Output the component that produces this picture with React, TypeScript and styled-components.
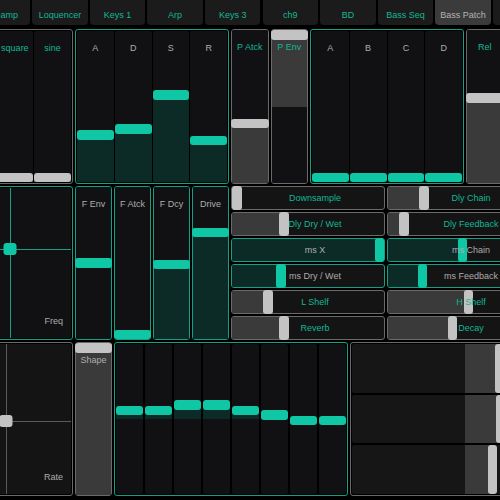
import React from 'react';
import styled, { createGlobalStyle } from 'styled-components';

type Tone = 'teal' | 'grey';

const colors = {
  teal: '#0fc7a4',
  tealLine: '#13a086',
  tealText: '#12b795',
  tealFill: '#0c2b27',
  grey: '#c3c3c3',
  greyLine: '#6a6a6a',
  greyPadLine: '#5a5a5a',
  greyFill: '#3a3a3a',
  label: '#adadad',
  track: '#111114',
  hTrack: '#141414',
};

const HANDLE = 9.5;
const SPAN = `(100% - ${HANDLE}px)`;

const flip = (tone: Tone): Tone => (tone === 'teal' ? 'grey' : 'teal');
const n = (v: number) => Number(v.toFixed(4));
const lineColor = (tone: Tone) => (tone === 'teal' ? colors.tealLine : colors.greyLine);
const knobColor = (tone: Tone) => (tone === 'teal' ? colors.teal : colors.grey);
const fillColor = (tone: Tone) => (tone === 'teal' ? colors.tealFill : colors.greyFill);
const textColor = (tone: Tone) => (tone === 'teal' ? colors.tealText : colors.label);

const GlobalStyle = createGlobalStyle`
  html, body {
    margin: 0;
    padding: 0;
    background: #000;
  }
  body {
    font-family: "Liberation Sans", Arial, sans-serif;
  }
`;

const Viewport = styled.div`
  width: 500px;
  height: 500px;
  overflow: hidden;
  background: #000;
`;

const Board = styled.div`
  display: flex;
  flex-direction: column;
  gap: 2px;
  width: 720px;
  margin-left: -81px;
`;

const TabBar = styled.div`
  display: flex;
  gap: 2.1px;
  margin-left: -2px;
  margin-bottom: 2px;
`;

const Tab = styled.div<{ $active?: boolean }>`
  flex: 0 0 55.5px;
  height: 25px;
  box-sizing: border-box;
  padding-top: 10px;
  border-radius: 0 0 4px 4px;
  background: ${(p) => (p.$active ? '#3b3b3b' : '#1b1b1b')};
  color: ${(p) => (p.$active ? '#b3b3b3' : colors.tealText)};
  font-size: 9px;
  line-height: 11px;
  text-align: center;
  white-space: nowrap;
  overflow: hidden;
`;

const Row = styled.div<{ $height: number }>`
  display: flex;
  gap: 2px;
  height: ${(p) => p.$height}px;
`;

const Panel = styled.div<{ $tone: Tone; $width: number; $column?: boolean; $gap?: number; $pad?: number }>`
  flex: 0 0 ${(p) => p.$width}px;
  box-sizing: border-box;
  display: flex;
  flex-direction: ${(p) => (p.$column ? 'column' : 'row')};
  gap: ${(p) => p.$gap ?? 1}px;
  padding: ${(p) => p.$pad ?? 1}px;
  border: 1px solid ${(p) => lineColor(p.$tone)};
  border-radius: 3px;
`;

const Track = styled.div`
  position: relative;
  flex: 1;
  min-width: 0;
  background: ${colors.track};
  border-radius: 2px;
`;

const VFill = styled.div<{ $tone: Tone }>`
  position: absolute;
  left: 0;
  right: 0;
  background: ${(p) => fillColor(p.$tone)};
`;

const VHandle = styled.div<{ $tone: Tone; $bleed?: boolean }>`
  position: absolute;
  left: ${(p) => (p.$bleed ? -1 : 0)}px;
  right: ${(p) => (p.$bleed ? -1 : 0)}px;
  height: ${HANDLE}px;
  border-radius: 3px;
  background: ${(p) => knobColor(p.$tone)};
`;

const TrackLabel = styled.div<{ $tone: Tone }>`
  position: relative;
  padding-top: 12px;
  text-align: center;
  font-size: 9px;
  line-height: 11px;
  white-space: nowrap;
  color: ${(p) => textColor(p.$tone)};
`;

const HColumn = styled.div`
  flex: 0 0 154px;
  display: flex;
  flex-direction: column;
  gap: 2px;
`;

const HTrack = styled.div<{ $tone: Tone }>`
  position: relative;
  flex: 1;
  display: flex;
  align-items: center;
  justify-content: center;
  padding-left: 14px;
  border: 1px solid ${(p) => lineColor(p.$tone)};
  border-radius: 3px;
  background: ${colors.hTrack};
`;

const HFill = styled.div<{ $tone: Tone }>`
  position: absolute;
  top: 0;
  bottom: 0;
  left: 0;
  background: ${(p) => fillColor(p.$tone)};
  border-radius: 2px 0 0 2px;
`;

const HHandle = styled.div<{ $tone: Tone }>`
  position: absolute;
  top: -1px;
  bottom: -1px;
  width: ${HANDLE}px;
  border-radius: 3px;
  background: ${(p) => knobColor(p.$tone)};
`;

const HLabel = styled.span<{ $tone: Tone }>`
  position: relative;
  font-size: 9px;
  line-height: 11px;
  white-space: nowrap;
  color: ${(p) => textColor(p.$tone)};
`;

const Bar = styled.div`
  position: relative;
  flex: 1;
  background: #161616;
  border-radius: 2px;
`;

const BarFill = styled.div`
  position: absolute;
  top: 0;
  bottom: 0;
  background: ${colors.greyFill};
`;

const BarHandle = styled.div`
  position: absolute;
  top: 0;
  bottom: 0;
  width: ${HANDLE}px;
  border-radius: 3px;
  background: ${colors.grey};
`;

const Pad = styled.div<{ $tone: Tone }>`
  position: relative;
  flex: 1;
  display: flex;
  align-items: flex-end;
  justify-content: flex-end;
  padding: 0 8px 11px 0;
  background: ${(p) => (p.$tone === 'teal' ? colors.track : '#141414')};
  border-radius: 2px;
  overflow: hidden;
`;

const PadLine = styled.div<{ $tone: Tone; $axis: 'h' | 'v' }>`
  position: absolute;
  background: ${(p) => (p.$tone === 'teal' ? colors.tealLine : colors.greyPadLine)};
  ${(p) => (p.$axis === 'v' ? 'top: 0; bottom: 0; width: 1px;' : 'left: 0; right: 0; height: 1px;')}
`;

const PadHandle = styled.div<{ $tone: Tone }>`
  position: absolute;
  width: 13px;
  height: 12px;
  border-radius: 3px;
  transform: translate(-50%, -50%);
  background: ${(p) => knobColor(p.$tone)};
`;

const PadLabel = styled.span`
  position: relative;
  font-size: 9px;
  line-height: 11px;
  color: ${colors.label};
`;

interface FaderProps {
  label?: string;
  value: number;
  tone: Tone;
  labelTone?: Tone;
  bipolar?: boolean;
  bleed?: boolean;
}

function Fader({ label, value, tone, labelTone, bipolar, bleed }: Readonly<FaderProps>) {
  const centre = `calc(${n(1 - value)} * ${SPAN} + ${HANDLE / 2}px)`;
  let fill: React.CSSProperties = { top: centre, bottom: 0 };
  if (bipolar) {
    fill = value >= 0.5
      ? { top: centre, bottom: '50%' }
      : { top: '50%', bottom: `calc(${n(value)} * ${SPAN} + ${HANDLE / 2}px)` };
  }
  return (
    <Track>
      <VFill $tone={tone} style={fill} />
      <VHandle $tone={tone} $bleed={bleed} style={{ top: `calc(${n(1 - value)} * ${SPAN})` }} />
      {label && <TrackLabel $tone={labelTone ?? flip(tone)}>{label}</TrackLabel>}
    </Track>
  );
}

function Solo(props: Readonly<FaderProps & { width?: number }>) {
  return (
    <Panel $tone={props.tone} $width={props.width ?? 37.5} $pad={0}>
      <Fader {...props} bleed />
    </Panel>
  );
}

interface HFaderProps {
  label: string;
  value: number;
  tone: Tone;
}

function HFader({ label, value, tone }: Readonly<HFaderProps>) {
  return (
    <HTrack $tone={tone}>
      <HFill $tone={tone} style={{ width: `calc(${n(value)} * ${SPAN} + ${HANDLE / 2}px)` }} />
      <HHandle $tone={tone} style={{ left: `calc(${n(value)} * ${SPAN})` }} />
      <HLabel $tone={flip(tone)}>{label}</HLabel>
    </HTrack>
  );
}

function BiBar({ value }: Readonly<{ value: number }>) {
  const centre = `calc(${n(value)} * ${SPAN} + ${HANDLE / 2}px)`;
  const fill: React.CSSProperties = value >= 0.5
    ? { left: '50%', right: `calc(${n(1 - value)} * ${SPAN} + ${HANDLE / 2}px)` }
    : { left: centre, right: '50%' };
  return (
    <Bar>
      <BarFill style={fill} />
      <BarHandle style={{ left: `calc(${n(value)} * ${SPAN})` }} />
    </Bar>
  );
}

interface XYPadProps {
  tone: Tone;
  x: number;
  y: number;
  label: string;
}

function XYPad({ tone, x, y, label }: Readonly<XYPadProps>) {
  return (
    <Panel $tone={tone} $width={154}>
      <Pad $tone={tone}>
        <PadLine $tone={tone} $axis="v" style={{ left: `${x * 100}%` }} />
        <PadLine $tone={tone} $axis="h" style={{ top: `${y * 100}%` }} />
        <PadHandle $tone={tone} style={{ left: `${x * 100}%`, top: `${y * 100}%` }} />
        <PadLabel>{label}</PadLabel>
      </Pad>
    </Panel>
  );
}

const tabs = ['Mixer', 'Preamp', 'Loquencer', 'Keys 1', 'Arp', 'Keys 3', 'ch9', 'BD', 'Bass Seq', 'Bass Patch', 'FX'];

const oscs = [
  { label: 'saw', value: 0 },
  { label: 'tri', value: 0 },
  { label: 'square', value: 0 },
  { label: 'sine', value: 0 },
];

const adsr = [
  { label: 'A', value: 0.3 },
  { label: 'D', value: 0.34 },
  { label: 'S', value: 0.58 },
  { label: 'R', value: 0.26 },
];

const filter = [
  { label: 'F Env', value: 0.5, bipolar: true },
  { label: 'F Atck', value: 0 },
  { label: 'F Dcy', value: 0.49 },
  { label: 'Drive', value: 0.715 },
];

const fxLeft: HFaderProps[] = [
  { label: 'Downsample', value: 0, tone: 'grey' },
  { label: 'Dly Dry / Wet', value: 0.33, tone: 'grey' },
  { label: 'ms X', value: 1, tone: 'teal' },
  { label: 'ms Dry / Wet', value: 0.31, tone: 'teal' },
  { label: 'L Shelf', value: 0.22, tone: 'grey' },
  { label: 'Reverb', value: 0.33, tone: 'grey' },
];

const fxRight: HFaderProps[] = [
  { label: 'Dly Chain', value: 0.22, tone: 'grey' },
  { label: 'Dly Feedback', value: 0.08, tone: 'grey' },
  { label: 'ms Chain', value: 0.49, tone: 'teal' },
  { label: 'ms Feedback', value: 0.21, tone: 'teal' },
  { label: 'H Shelf', value: 0.53, tone: 'grey' },
  { label: 'Decay', value: 0.42, tone: 'grey' },
];

const steps = [0.56, 0.56, 0.6, 0.6, 0.56, 0.53, 0.49, 0.49];

const mods = [0.66, 0.667, 0.627];

export default function App() {
  return (
    <Viewport>
      <GlobalStyle />
      <Board>
        <TabBar>
          {tabs.map((name) => (
            <Tab key={name} $active={name === 'Bass Patch'}>{name}</Tab>
          ))}
        </TabBar>

        <Row $height={155}>
          <Panel $tone="grey" $width={154}>
            {oscs.map((o) => (
              <Fader key={o.label} label={o.label} value={o.value} tone="grey" />
            ))}
          </Panel>
          <Panel $tone="teal" $width={154}>
            {adsr.map((o) => (
              <Fader key={o.label} label={o.label} value={o.value} tone="teal" />
            ))}
          </Panel>
          <Solo label="P Atck" value={0.38} tone="grey" />
          <Solo label="P Env" value={1} tone="grey" bipolar />
          <Panel $tone="teal" $width={154}>
            {['A', 'B', 'C', 'D'].map((l) => (
              <Fader key={l} label={l} value={0} tone="teal" />
            ))}
          </Panel>
          <Solo label="Rel" value={0.56} tone="grey" />
        </Row>

        <Row $height={154}>
          <XYPad tone="teal" x={0.593} y={0.407} label="Freq" />
          {filter.map((f) => (
            <Solo key={f.label} label={f.label} value={f.value} bipolar={f.bipolar} tone="teal" width={37} />
          ))}
          <HColumn>
            {fxLeft.map((f) => (
              <HFader key={f.label} {...f} />
            ))}
          </HColumn>
          <HColumn>
            {fxRight.map((f) => (
              <HFader key={f.label} {...f} />
            ))}
          </HColumn>
        </Row>

        <Row $height={154}>
          <XYPad tone="grey" x={0.567} y={0.513} label="Rate" />
          <Solo label="Shape" value={1} tone="grey" labelTone="grey" width={37} />
          <Panel $tone="teal" $width={234} $gap={1.5}>
            {steps.map((v, i) => (
              <Fader key={i} value={v} tone="teal" bipolar />
            ))}
          </Panel>
          <Panel $tone="grey" $width={230} $column $gap={1.7}>
            {mods.map((v, i) => (
              <BiBar key={i} value={v} />
            ))}
          </Panel>
        </Row>
      </Board>
    </Viewport>
  );
}
